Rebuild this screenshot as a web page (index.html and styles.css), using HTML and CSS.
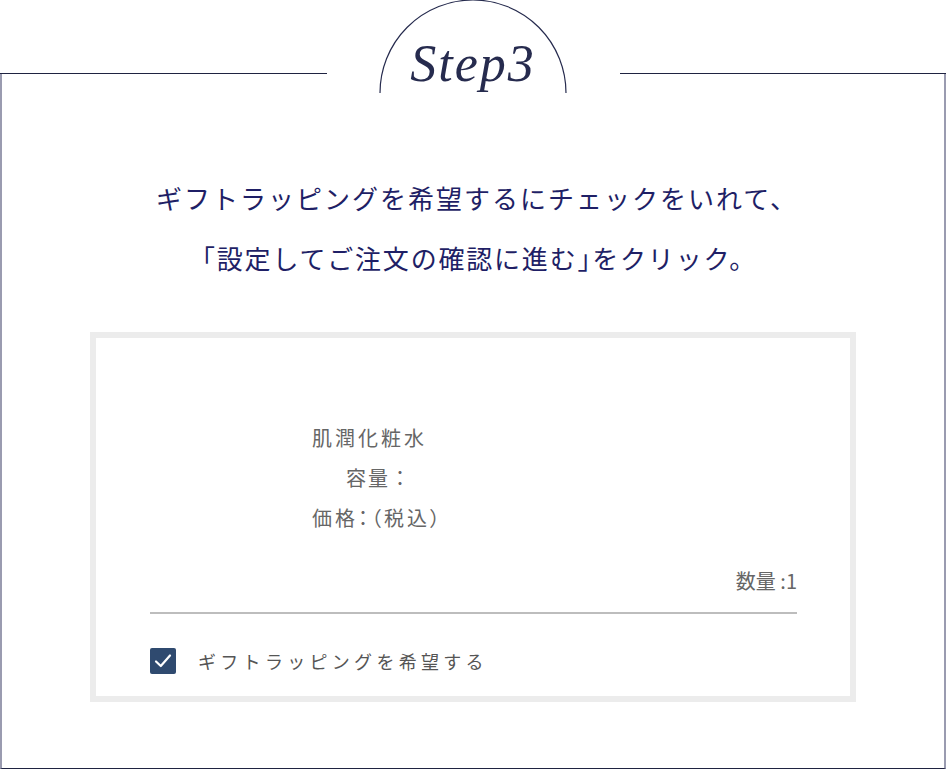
FILE: index.html
```html
<!DOCTYPE html>
<html lang="ja">
<head>
    <meta charset="UTF-8">
    <meta name="viewport" content="width=device-width, initial-scale=1.0">
    <title>Step3 ギフトラッピング</title>
    <link rel="stylesheet" href="styles.css">
</head>
<body>
    <section class="frame">
        <div class="frame-top">
            <span class="rule"></span>
            <span class="gap"></span>
            <span class="rule"></span>
        </div>
        <div class="step-badge">
            <svg class="arc" width="190" height="94" viewBox="0 0 190 94">
                <path d="M2 93 A93 93 0 0 1 188 93" fill="none" stroke="#262b4e" stroke-width="1.2"/>
            </svg>
            <span class="step-title" lang="en">Step3</span>
        </div>

        <p class="lead">
            <span class="lead-first">ギフトラッピングを希望するにチェックをいれて、</span><br>
            「設定してご注文の確認に進む<span class="tight">」</span>をクリック。
        </p>

        <div class="cart">
            <div class="product">
                <div class="product-name">肌潤化粧水</div>
                <div class="product-size">容量：</div>
                <div class="product-price">価格：（税込）</div>
            </div>
            <div class="qty">数量 :1</div>
            <hr class="divider">
            <label class="gift">
                <span class="check">
                    <svg width="18" height="18" viewBox="0 0 18 18">
                        <path d="M2 9.5 L6.8 14 L16 3.5" fill="none" stroke="#fff" stroke-width="2.2" stroke-linecap="round" stroke-linejoin="round"/>
                    </svg>
                </span>
                <span class="gift-text">ギフトラッピングを希望する</span>
            </label>
        </div>
    </section>
</body>
</html>
```

FILE: styles.css
```css
/* Step guide frame */
body {
    margin: 0;
    font-family: "Noto Sans CJK JP", "Noto Sans", sans-serif;
    background-color: #fff;
}
.frame {
    position: relative;
    margin-top: 73px;
    height: 696px;
    box-sizing: border-box;
    border-left: 2px solid #9a9bb0;
    border-right: 2px solid #9a9bb0;
    border-bottom: 1px solid #1f2341;
}
.frame-top {
    display: flex;
    margin: 0 -2px;
}
.frame-top .rule {
    flex: 1;
    border-top: 1px solid #1f2341;
}
.frame-top .gap {
    width: 293px;
}
.step-badge {
    position: absolute;
    top: -73px;
    left: 50%;
    width: 190px;
    height: 94px;
    margin-left: -95px;
}
.arc {
    display: block;
}
.step-title {
    position: absolute;
    left: 0;
    right: 0;
    top: 38px;
    text-align: center;
    font-family: "Liberation Serif", serif;
    font-style: italic;
    font-weight: normal;
    font-size: 52px;
    line-height: 1;
    letter-spacing: 2px;
    color: #262b4e;
}

/* Instructions */
.lead {
    margin: 0;
    padding-top: 94px;
    text-align: center;
    font-size: 26px;
    line-height: 60px;
    letter-spacing: 1.8px;
    color: #1f1f66;
}
.lead-first {
    margin-left: 8px;
    letter-spacing: 2px;
}
.tight {
    font-feature-settings: "halt";
}

/* Cart item box */
.cart {
    width: 766px;
    margin: 44px auto 0;
    box-sizing: border-box;
    border: 6px solid #ececec;
    padding: 80px 53px 22px 54px;
}
.product {
    padding-left: 162px;
    font-size: 20px;
    line-height: 40px;
    letter-spacing: 3px;
    font-feature-settings: "palt";
    color: #666;
}
.product-size {
    padding-left: 34px;
    letter-spacing: 2px;
    font-feature-settings: normal;
}
.qty {
    margin-top: 23px;
    text-align: right;
    font-size: 20px;
    line-height: 40px;
    color: #666;
}
.divider {
    margin: 11px 0 0;
    border: 0;
    border-top: 2px solid #bdbdbd;
}
.gift {
    display: flex;
    align-items: center;
    margin-top: 34px;
}
.check {
    display: flex;
    align-items: center;
    justify-content: center;
    width: 26px;
    height: 26px;
    border-radius: 2px;
    background-color: #2f4a6f;
}
.gift-text {
    margin-left: 22px;
    font-size: 18px;
    letter-spacing: 4.3px;
    color: #555;
}
```
